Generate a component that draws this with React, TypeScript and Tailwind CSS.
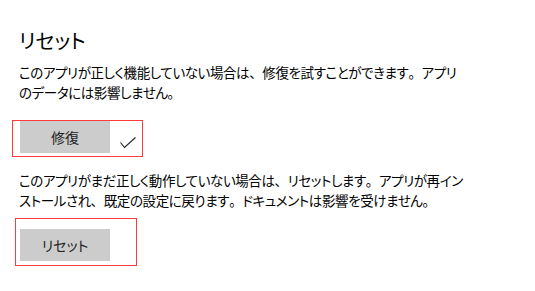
const font = "font-['Noto_Sans_CJK_JP','Noto_Sans',sans-serif] [font-feature-settings:'palt']";

// punctuation keeps its full width, as in the original
function P({ c }: { c: string }) {
  return <span className="[font-feature-settings:normal]">{c}</span>;
}

export default function App() {
  return (
    <div className={`min-h-screen w-[535px] bg-white text-black pl-[19px] pt-[27px] ${font}`}>
      <h2 className="text-[20px] leading-[28px]">リセット</h2>
      <p className="mt-[7px] text-[13.5px] leading-[20px] tracking-[-0.4px]">
        このアプリが正しく機能していない場合は<P c="、" />修復を試すことができます<P c="。" />アプリ
        <br />
        のデータには影響しません<P c="。" />
      </p>

      <div className="mt-[18px] -ml-[7px] flex h-[37px] w-[131px] items-start border border-[#ff3b3b] pl-[7px]">
        <button className="h-[32px] w-[90px] bg-[#cccccc] text-[14px] text-[#222]">修復</button>
        <svg width="16" height="12" viewBox="0 0 16 12" className="ml-[10px] mt-[16px]">
          <polyline points="0.5,5.5 4.5,10.5 15.5,0.5" fill="none" stroke="#222" strokeWidth="1.1" />
        </svg>
      </div>

      <p className="mt-[13px] text-[13.5px] leading-[20px] tracking-[-0.4px]">
        このアプリがまだ正しく動作していない場合は<P c="、" />リセットします<P c="。" />アプリが再イン
        <br />
        ストールされ<P c="、" />既定の設定に戻ります<P c="。" />ドキュメントは影響を受けません<P c="。" />
      </p>

      <div className="mt-[8px] -ml-[4px] flex h-[48px] w-[122px] items-start border border-[#ff3b3b] pl-[4px] pt-[10px]">
        <button className="h-[32px] w-[90px] bg-[#cccccc] text-[14px] text-[#222]">リセット</button>
      </div>
    </div>
  );
}
